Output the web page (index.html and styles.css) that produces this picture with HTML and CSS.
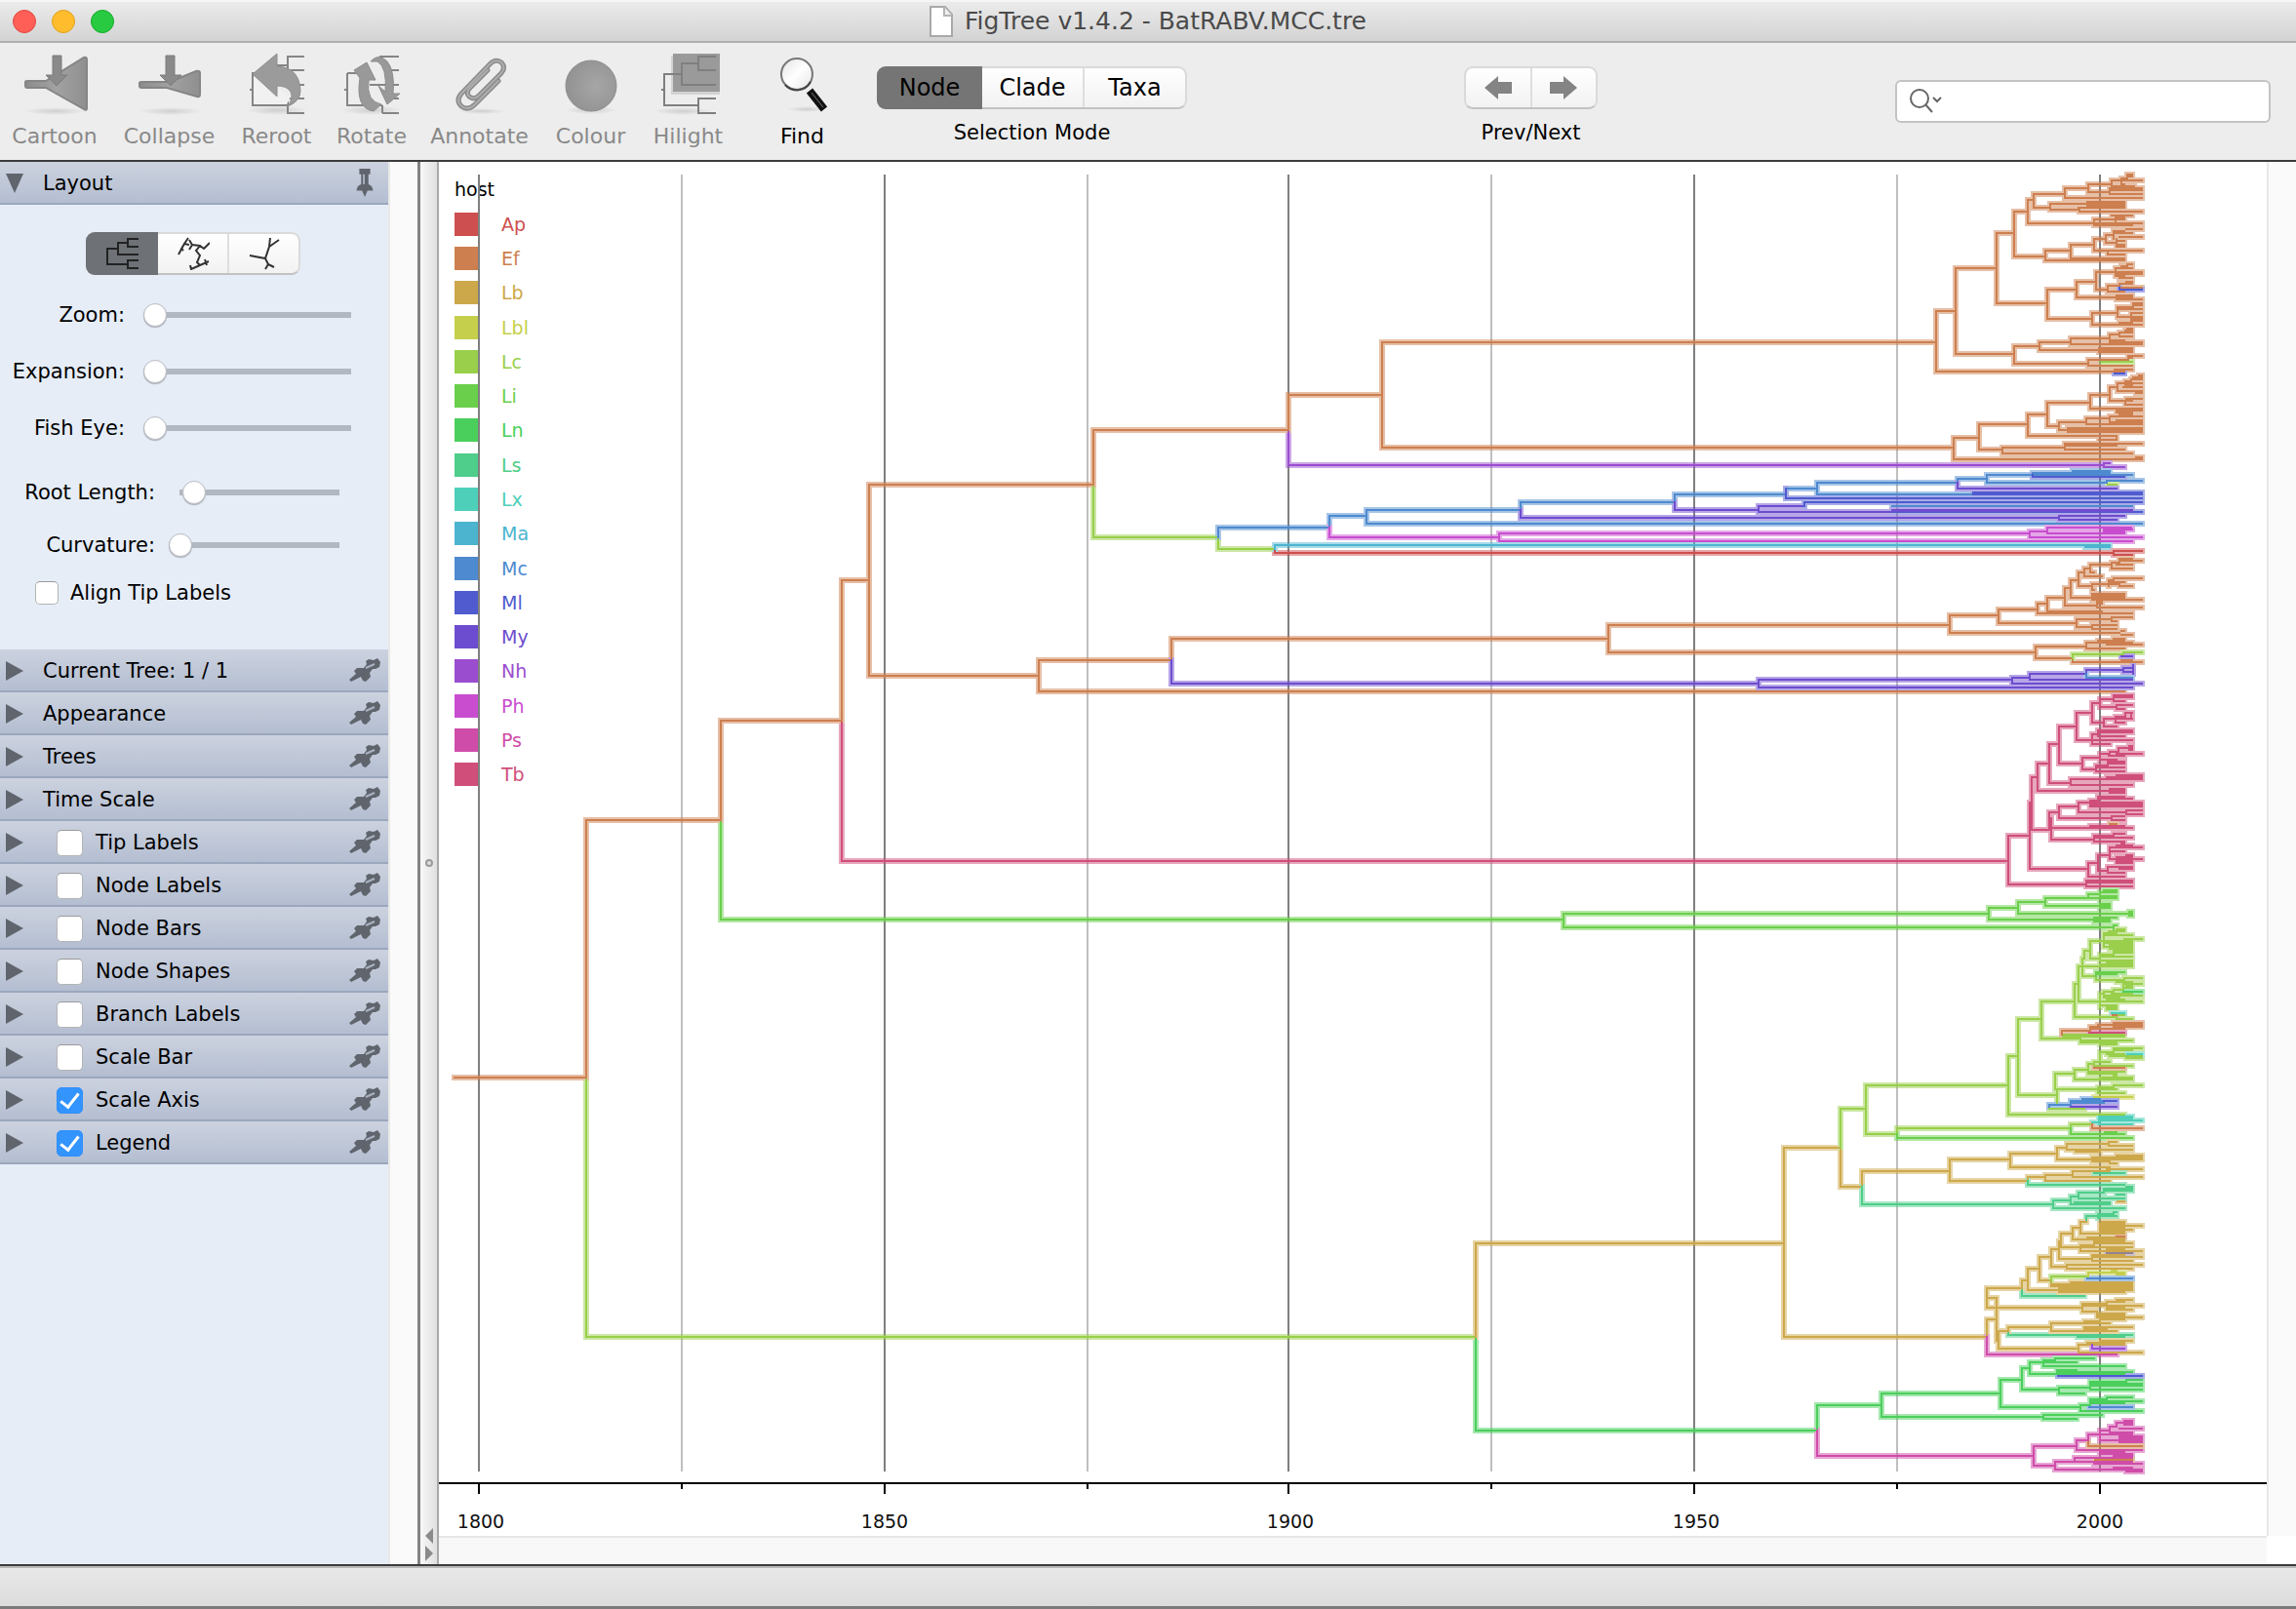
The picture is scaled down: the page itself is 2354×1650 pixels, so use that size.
FILE: index.html
```
<!DOCTYPE html>
<html lang="en">
<head>
<meta charset="utf-8">
<title>FigTree v1.4.2 - BatRABV.MCC.tre</title>
<link rel="stylesheet" href="styles.css">
</head>
<body>
<svg class="defs" width="0" height="0" aria-hidden="true">
  <defs>
    <linearGradient id="metal" x1="0" y1="0" x2="1" y2="0"><stop offset="0" stop-color="#8c8c8c"/><stop offset=".5" stop-color="#a2a2a2"/><stop offset="1" stop-color="#8f8f8f"/></linearGradient>
    <radialGradient id="ball" cx=".6" cy=".5" r=".6"><stop offset="0" stop-color="#a6a6a6"/><stop offset="1" stop-color="#929292"/></radialGradient>
    <radialGradient id="floor"><stop offset="0" stop-color="#000" stop-opacity=".13"/><stop offset="1" stop-color="#000" stop-opacity="0"/></radialGradient>
    <linearGradient id="glass" x1="0" y1="0" x2="1" y2="1"><stop offset="0" stop-color="#e2e2e2"/><stop offset=".5" stop-color="#fff"/><stop offset="1" stop-color="#e4e4e4"/></linearGradient>
    <symbol id="pin" viewBox="0 0 32 26"><path d="M0 22 7 16 5 13 8 10 15 10 18 6 17 3 20 1 25 2 29 0 32 4 31 9 27 11 24 11 21 15 22 19 17 24 14 23 12 19 2 24Z" fill="#60656d"/><path d="M17 10 26 6" stroke="#aab3c2" stroke-width="2"/></symbol>
  </defs>
</svg>

<header class="titlebar">
  <div class="lights"><span class="light close"></span><span class="light minimise"></span><span class="light grow"></span></div>
  <h1 class="title">
    <svg width="24" height="32" viewBox="0 0 24 32"><path d="M1 1H16L23 9V31H1Z" fill="#fff" stroke="#a9a9a9" stroke-width="2"/><path d="M15 1V10H23" fill="#eee" stroke="#b5b5b5" stroke-width="2"/></svg>
    FigTree v1.4.2 - BatRABV.MCC.tre
  </h1>
</header>

<div class="toolbar">
  <div class="tools">
    <button class="tool" disabled>
      <svg width="64" height="64" viewBox="0 0 64 64"><ellipse cx="33" cy="60" rx="32" ry="4" fill="url(#floor)"/><path d="M2 30Q2 29 4 29H23L62 5Q65 4 65 7V57Q65 60 62 58L23 36H4Q2 36 2 34Z" fill="url(#metal)" stroke="#858585" stroke-width="2"/><path d="M30 3H39V23H45L34 34 23 23H30Z" fill="#8a8a8a" stroke="#7d7d7d"/></svg>
      Cartoon</button>
    <button class="tool" disabled>
      <svg width="64" height="64" viewBox="0 0 64 64"><ellipse cx="33" cy="60" rx="32" ry="4" fill="url(#floor)"/><path d="M1 31Q1 30 3 30H32L59 19Q63 18 63 21V43Q63 46 60 45L29 36H3Q1 36 1 34Z" fill="url(#metal)" stroke="#858585" stroke-width="2"/><path d="M28 3H37V23H44L33 34 22 23H28Z" fill="#8a8a8a" stroke="#7d7d7d"/></svg>
      Collapse</button>
    <button class="tool" disabled>
      <svg width="64" height="64" viewBox="0 0 64 64"><ellipse cx="32" cy="59" rx="32" ry="5" fill="url(#floor)"/><path d="M60 4H43V13H32V21H7V54H43V62H60M43 13V18H60M60 33H43M43 54V47H60M4 38H8" fill="none" stroke="#858585" stroke-width="2"/><path d="M8 24 31 46V36L46 45 42 53H8Z" fill="#f1f1f1"/><path d="M7 54H43" stroke="#858585" stroke-width="2"/><path d="M7 22 32 1V14Q55 15 56 39 56 50 43 55 49 47 46 40 42 34 32 34V45Z" fill="#9b9b9b" stroke="#8f8f8f"/></svg>
      Reroot</button>
    <button class="tool" disabled>
      <svg width="64" height="64" viewBox="0 0 64 64"><ellipse cx="32" cy="59" rx="32" ry="5" fill="url(#floor)"/><path d="M60 4H40M60 18H50M60 33H30M43 62H60M43 54V62M60 47H50M7 21V54H43M7 21H28V13M4 38H8" fill="none" stroke="#858585" stroke-width="2"/><path d="M27 10 36 28H29Q26 50 42 53L34 60Q15 57 20 26L14 18Z" fill="#999" stroke="#8c8c8c"/><path d="M31 9Q39 0 48 9 56 19 54 42H61L48 53 39 34 46 40Q48 15 38 9Z" fill="#999" stroke="#8c8c8c"/></svg>
      Rotate</button>
    <button class="tool" disabled>
      <svg width="64" height="64" viewBox="0 0 64 64"><ellipse cx="34" cy="60" rx="24" ry="3" fill="url(#floor)"/><path d="M51 29 27 53Q20 60 13 55 7 49 13 42L43 11Q48 6 54 10 59 15 54 21L31 44Q26 49 21 45 17 41 22 36L40 18" fill="none" stroke="#8b8b8b" stroke-width="5" stroke-linecap="round"/><path d="M51 29 27 53Q20 60 13 55 7 49 13 42L43 11Q48 6 54 10 59 15 54 21L31 44Q26 49 21 45 17 41 22 36L40 18" fill="none" stroke="#adadad" stroke-width="2" stroke-linecap="round"/></svg>
      Annotate</button>
    <button class="tool" disabled>
      <svg width="64" height="64" viewBox="0 0 64 64"><ellipse cx="32" cy="59" rx="26" ry="4" fill="url(#floor)"/><circle cx="32" cy="34" r="26" fill="url(#ball)" stroke="#8e8e8e"/></svg>
      Colour</button>
    <button class="tool" disabled>
      <svg width="64" height="64" viewBox="0 0 64 64"><ellipse cx="26" cy="60" rx="30" ry="4" fill="url(#floor)"/><rect x="14" y="3" width="50" height="40" fill="#d2d2d2"/><rect x="16" y="1" width="48" height="39" fill="#9a9a9a"/><path d="M60 4H42V18H60M42 11H25V33H60M25 22H7V54H42M60 47H42V62H60M4 38H8" fill="none" stroke="#7f7f7f" stroke-width="2"/></svg>
      Hilight</button>
    <button class="tool find">
      <svg width="64" height="64" viewBox="0 0 64 64"><ellipse cx="36" cy="58" rx="20" ry="3" fill="url(#floor)"/><path d="M39 39 54 58" stroke="#111" stroke-width="8"/><path d="M41 41 53 56" stroke="#777" stroke-width="1"/><circle cx="26" cy="22" r="16" fill="url(#glass)" stroke="#777" stroke-width="2"/><path d="M14 33A16 16 0 0 0 40 30" fill="none" stroke="#444" stroke-width="2"/></svg>
      Find</button>
  </div>
  <div class="group mode">
    <div class="segments"><button class="seg on">Node</button><button class="seg">Clade</button><button class="seg">Taxa</button></div>
    <span>Selection Mode</span>
  </div>
  <div class="group nav">
    <div class="segments">
      <button class="seg" aria-label="Previous"><svg width="28" height="24" viewBox="0 0 28 24"><path d="M0 12 14 0V6H28V18H14V24Z" fill="#848484"/></svg></button>
      <button class="seg" aria-label="Next"><svg width="28" height="24" viewBox="0 0 28 24"><path d="M28 12 14 0V6H0V18H14V24Z" fill="#848484"/></svg></button>
    </div>
    <span>Prev/Next</span>
  </div>
  <label class="search">
    <svg width="36" height="28" viewBox="0 0 36 28"><circle cx="11" cy="11" r="9" fill="none" stroke="#666" stroke-width="2"/><path d="M17 17 24 25M25 10 29 14 33 10" fill="none" stroke="#666" stroke-width="2"/></svg>
    <input type="text" aria-label="Search">
  </label>
</div>

<main class="workspace">
  <aside class="sidebar">
    <section>
      <div class="head"><button class="fold open">Layout</button><button class="pin" aria-label="Pin"><svg width="18" height="30" viewBox="0 0 18 32"><path d="M3 0H15V6H13V17Q18 19 18 24H12L9 31 6 24H0Q0 19 5 17V6H3Z" fill="#60656d"/><path d="M8 6V17" stroke="#aab3c2" stroke-width="2"/></svg></button></div>
      <div class="panel">
        <div class="segments shapes">
          <button class="seg on" aria-label="Rectangular"><svg width="34" height="34" viewBox="0 0 34 34"><path d="M34 2H23V10H34M23 6H13V18H34M13 12H2V28H23M34 24H23V32H34" fill="none" stroke="#222" stroke-width="2"/></svg></button>
          <button class="seg" aria-label="Polar"><svg width="34" height="34" viewBox="0 0 34 34"><path d="M2 18 8 7 13 8M8 7 12 1M8 7 5 12 7 14M13 3 16 8 13 13M16 8 24 9 28 12 34 6M24 9 20 14 24 19 21 26 24 29 33 25M29 23 31 29M14 29 15 33 24 29" fill="none" stroke="#333" stroke-width="2"/></svg></button>
          <button class="seg" aria-label="Radial"><svg width="34" height="34" viewBox="0 0 34 34"><path d="M2 19 18 22 22 10 23 1M22 10 32 3M18 22 21 28 18 33M21 28 27 31" fill="none" stroke="#333" stroke-width="2"/></svg></button>
        </div>
        <div class="field"><label for="zoom">Zoom:</label><input id="zoom" type="range" value="0"></div>
        <div class="field"><label for="expansion">Expansion:</label><input id="expansion" type="range" value="0"></div>
        <div class="field"><label for="fisheye">Fish Eye:</label><input id="fisheye" type="range" value="0"></div>
        <div class="field wide root"><label for="rootlen">Root Length:</label><input id="rootlen" type="range" value="2"></div>
        <div class="field wide curve"><label for="curvature">Curvature:</label><input id="curvature" type="range" value="0"></div>
        <label class="tick align"><input type="checkbox"> Align Tip Labels</label>
      </div>
    </section>
    <div class="head"><button class="fold">Current Tree: 1 / 1</button><button class="pin" aria-label="Pin"><svg width="32" height="26"><use href="#pin"/></svg></button></div>
    <div class="head"><button class="fold">Appearance</button><button class="pin" aria-label="Pin"><svg width="32" height="26"><use href="#pin"/></svg></button></div>
    <div class="head"><button class="fold">Trees</button><button class="pin" aria-label="Pin"><svg width="32" height="26"><use href="#pin"/></svg></button></div>
    <div class="head"><button class="fold">Time Scale</button><button class="pin" aria-label="Pin"><svg width="32" height="26"><use href="#pin"/></svg></button></div>
    <div class="head"><button class="fold" aria-label="Expand"></button><label class="tick"><input type="checkbox"> Tip Labels</label><button class="pin" aria-label="Pin"><svg width="32" height="26"><use href="#pin"/></svg></button></div>
    <div class="head"><button class="fold" aria-label="Expand"></button><label class="tick"><input type="checkbox"> Node Labels</label><button class="pin" aria-label="Pin"><svg width="32" height="26"><use href="#pin"/></svg></button></div>
    <div class="head"><button class="fold" aria-label="Expand"></button><label class="tick"><input type="checkbox"> Node Bars</label><button class="pin" aria-label="Pin"><svg width="32" height="26"><use href="#pin"/></svg></button></div>
    <div class="head"><button class="fold" aria-label="Expand"></button><label class="tick"><input type="checkbox"> Node Shapes</label><button class="pin" aria-label="Pin"><svg width="32" height="26"><use href="#pin"/></svg></button></div>
    <div class="head"><button class="fold" aria-label="Expand"></button><label class="tick"><input type="checkbox"> Branch Labels</label><button class="pin" aria-label="Pin"><svg width="32" height="26"><use href="#pin"/></svg></button></div>
    <div class="head"><button class="fold" aria-label="Expand"></button><label class="tick"><input type="checkbox"> Scale Bar</label><button class="pin" aria-label="Pin"><svg width="32" height="26"><use href="#pin"/></svg></button></div>
    <div class="head"><button class="fold" aria-label="Expand"></button><label class="tick"><input type="checkbox" checked> Scale Axis</label><button class="pin" aria-label="Pin"><svg width="32" height="26"><use href="#pin"/></svg></button></div>
    <div class="head"><button class="fold" aria-label="Expand"></button><label class="tick"><input type="checkbox" checked> Legend</label><button class="pin" aria-label="Pin"><svg width="32" height="26"><use href="#pin"/></svg></button></div>
  </aside>
  <div class="gutter"></div>
  <div class="splitter"><span class="grip"></span><svg class="nudge" width="10" height="36" viewBox="0 0 10 36"><path d="M9 0V16L1 8ZM1 18V34L9 26Z" fill="#8a8a8a"/></svg></div>
  <div class="view">
    <div class="plot">
      <div class="legend">
        <div class="legend-title">host</div>
        <ul>
          <li class="ap">Ap</li><li class="ef">Ef</li><li class="lb">Lb</li><li class="lbl">Lbl</li><li class="lc">Lc</li><li class="li">Li</li><li class="ln">Ln</li><li class="ls">Ls</li><li class="lx">Lx</li><li class="ma">Ma</li><li class="mc">Mc</li><li class="ml">Ml</li><li class="my">My</li><li class="nh">Nh</li><li class="ph">Ph</li><li class="ps">Ps</li><li class="tb">Tb</li>
        </ul>
      </div>
      <svg class="tree" viewBox="450 166 1874 1409">
        <path class="minor" d="M699 179V1509M1115 179V1509M1529 179V1509M1945 179V1509"/>
        <path class="major" d="M491 179V1509M907 179V1509M1321 179V1509M1737 179V1509M2153 179V1509"/>
        <path class="axis" d="M450 1521H2324M491 1521V1532M907 1521V1532M1321 1521V1532M1737 1521V1532M2153 1521V1532M699 1521V1527M1115 1521V1527M1529 1521V1527M1945 1521V1527"/>
        <g class="years"><text x="493" y="1567">1800</text><text x="907" y="1567">1850</text><text x="1323" y="1567">1900</text><text x="1739" y="1567">1950</text><text x="2153" y="1567">2000</text></g>
        <defs>
          <g id="branches">
            <!-- backbone -->
            <path class="lc" d="M601 1105V1371H1513M1121 497V551H1249V563H1307"/>
            <path class="li" d="M739 841V943H1603M1603 937V951M1603 937H1940M1603 951H1940"/>
            <path class="tb" d="M863 739V883H1940"/>
            <path class="nh" d="M1321 441V477H1940"/>
            <path class="ef" d="M466 1105H601V841H739V739H863V595H891M891 497V693M891 497H1121V441H1321V405H1417M1417 351V459M1417 351H1940M1417 459H1940M891 693H1065M1065 677V709M1065 709H1940M1065 677H1201V655H1649M1649 641V669M1649 641H1940M1649 669H1940"/>
            <path class="mc" d="M1249 551V541H1363V529H1401M1401 523V537M1401 537H1940M1401 523H1559V515H1717V507H1831V501H1863M1863 495V507M1863 495H1940M1863 507H1940"/>
            <path class="my" d="M1559 523V531H1940M1717 515V523H1803M1803 519V525M1803 519H1850M1803 525H1940"/>
            <path class="ml" d="M1831 501V511H1940M1850 519V515H1940"/>
            <path class="ph" d="M1363 541V551H1537M1537 547V555M1537 547H1940M1537 555H1940"/>
            <path class="ap" d="M1307 563V567H1940"/><path class="ma" d="M1307 563V559H1940"/>
            <path class="my" d="M1201 677V701H1803M1803 697V705M1803 697H1940M1803 705H1940"/>
            <path class="ln" d="M1513 1371V1467H1863V1441H1929M1929 1429V1453M1929 1429H1940M1929 1453H1940"/>
            <path class="ps" d="M1863 1467V1493H1940"/>
            <path class="lb" d="M1513 1371V1275H1829M1829 1177V1371M1829 1371H1940M1829 1177H1887V1217H1909V1201H1940"/>
            <path class="lc" d="M1887 1177V1137H1913M1913 1113V1163M1913 1113H1940M1913 1163H1940"/>
            <path class="ls" d="M1909 1217V1235H1940"/>
            <!-- recent clades, drawn on a three times finer grid -->
            <g transform="translate(1940 165) scale(.333333)">
              <path class="ef" d="M0 558H135M135 462V648M135 462H195M135 648H714M685 642H738M195 330V594M195 330H321M321 222V438M321 222H375M375 156V294M375 156H417M417 120V192M417 120H435M435 102V144M435 102H531M531 84V114M531 84H603M603 72V96M603 72H675M675 60V78M675 60H768M705 54V72M705 54H723M723 42V48M723 42H738M723 48H738M705 72H714M675 78H744M603 96H670M669 84V102M669 84H768M669 90H768M669 102H768M531 114H768M435 144H487M487 132V150M487 132H600M600 126H714M600 132H714M600 138H714M573 144H714M487 150H577M577 144V156M577 156H768M675 168H738M417 192H621M621 180V198M621 180H687M687 174V186M687 174H714M687 180H714M621 192H768M621 198H738M375 294H471M471 276V306M471 276H549M549 258V300M549 258H621M621 240V276M621 240H657M657 228V252M657 228H681M681 216V240M681 216H714M720 210H768M681 222H738M657 252H690M690 240V252M700 234H768M690 246H714M690 258H714M621 276H768M663 276V288M663 288H714M690 264H714M549 300H714M471 306H714"/>
              <path class="ef" d="M321 438H477M477 396V486M477 396H567M567 372V420M567 372H627M627 342V396M627 342H687M687 330V354M687 330H738M705 324H723V318H738M687 342H768M687 348H768M687 354H714M700 360H738M627 396H663M663 384V402M663 384H700V378H738M720 372H738M700 390H768M663 402H714M567 420H690M690 414H738M690 420H738M690 426H768M477 486H615M615 468V504M615 468H693M693 450V480M693 450H741M741 438H768M741 444V456M741 444H768M700 456H768M693 480H735M735 468V492M735 468H768M735 480H768M735 486H768M735 492H768M615 504H768M700 498H738"/>
              <path class="ef" d="M195 594H375M375 570V624M375 570H453M453 558V582M453 558H549M549 546V564M549 546H669M669 534V552M669 534H700V528H738M717 528V522H738M723 516H738M700 540H738M669 552H714M549 564H768M669 558H768M453 582H738M635 576H738M635 588H738M375 624H603M603 612V630M603 612H725V600H768M725 606H738M603 630H738"/>
              <path class="ef" d="M0 882H189M189 852V918M189 852H267M267 810V888M267 810H417M417 780V846M417 780H477M477 744V816M477 744H609M609 720V762M609 720H669M669 696V738M669 696H693M693 684V708M693 684H717V678H735V672H768M741 666H768M760 660H768M717 684H768M717 690H738M710 696H768M693 708H768M750 714H768M669 738H717M717 738V750M720 732H768M717 738H738M717 750H768M609 762H768M690 768H768M690 774H738M477 816H513M513 804V828M513 804H597M597 792V810M597 792H669M669 786V804M669 786H768M669 804H768M700 780H738M690 798H768M597 810H768M513 828H540M540 822H768M540 828H768M540 834H768M417 846H690M690 846V858M636 858H690M267 888H339M339 882V900M339 882H531M531 870V888M531 870H768M531 876H690M531 888H714M339 900H738M189 918H768M750 912H768"/>
              <path class="ml" d="M699 390V396H768M685 654H714"/><path class="lc" d="M645 618H738"/>
              <path class="nh" d="M0 936H651M651 930V942M651 930H669M651 942H714"/>
            </g>
            <g transform="translate(1940 465) scale(.333333)">
              <path class="mc" d="M0 90H201V78H291M291 66V90M291 66H433V60H555V54H669M555 60H669M433 66H738M291 90H660M660 84V90M660 84H768M0 126H249M0 162H738M0 216H768"/>
              <path class="ml" d="M433 66V72H714M249 126V120H768M249 126H768M0 138H768M0 150H768M0 180H768"/>
              <path class="lc" d="M663 96H690"/>
              <path class="my" d="M201 90V108H690M0 174H738M0 178H738M0 198H513M513 192V204M513 192H714M513 204H690"/>
              <path class="ph" d="M0 246H423M423 240V258M423 240H477V228H735M650 234H738M650 240H714M477 246H714M423 258H768M0 270H738"/>
              <path class="ma" d="M0 282H669M595 288H669"/><path class="ap" d="M0 306H681M681 300V312M681 300H768M681 312H738"/>
              <path class="ef" d="M0 528H177M177 498V552M177 498H327M327 480V522M327 480H447M447 462V492M447 462H477M477 444V486M477 444H531M531 414V468M531 414H549M549 390V444M549 390H573M573 366V408M573 366H591M591 354V378M591 354H609M609 342V366M609 342H675M675 336V354M675 336H700V330H768M700 324H738M690 342H738M675 354H738M609 366H621M591 378H645M573 408H615M615 402V420M615 402H667M667 390V408M667 390H680V384H768M667 396H714M667 402H700V408H738M615 420H621M549 444H714M615 450H768M615 432V444M615 432H714M615 438H714M531 468H630M630 456V474M630 456H645M630 462H645M630 474H768M477 486H645M447 492H738M327 522H567M567 510V534M567 510H675V504H738M675 516H690M567 534H615M615 528V540M615 528H690M615 540H690M177 552H700M705 546H714M705 558H738"/>
              <path class="ef" d="M0 612H441M441 594V630M441 594H597M597 582V600M597 582H633V576H714M680 570H714M633 582H738M660 588H768M597 600H714M441 630H555V642H768M705 636H738M0 732H714"/>
              <path class="lc" d="M555 630V618H710V612H768"/>
              <path class="my" d="M705 624H738M0 696H369M369 690V708M369 690H423V678H597V666H710M710 660V672M710 672H738M710 660H741M741 650V678M423 684V696H738M369 708H768M0 720H738"/>
              <path class="mc" d="M597 678V690H738"/>
            </g>
            <g transform="translate(1940 700) scale(.333333)">
              <path class="tb" d="M0 549H357M357 471V621M357 471H423M423 369V573M423 369H429M429 291V453M429 291H447M447 249V333M447 249H483M483 189V309M483 189H513M513 135V249M513 135H567M567 93V177M567 93H615M615 63V123M615 63H639M639 51V75M639 51H681M681 39V57M681 39H738M681 45H738M681 57H714M639 75H690V69H738M690 81H714M615 123H651M651 111V135M651 111H687M687 105V123M687 105H717M717 93V105M717 93H738M735 93V111M690 111H738M687 123H714M651 135H690M567 177H615M615 159V189M615 159H633M633 147V165M633 147H738M633 153H738M633 165H714M615 177H738M615 189H669"/>
              <path class="tb" d="M513 249H585M585 231V267M585 231H639M639 219V237M639 219H670V213H697V201H738M730 195H738M730 207H738M690 219H768M665 225H714M639 237H690M585 267H627M627 255V273M627 255H663V243H714M663 249H714M627 261H714M627 273H714M483 309H549M549 297V315M549 297H768M660 291H768M690 285H768M549 315H738M447 333H714M669 327H714M669 339H714M429 453H489M483 399V453M483 399H513M513 381V417M513 381H573M573 369V399M573 369H609M609 363V381M609 363H633V351H714M633 357H738M609 369H768M609 381H768M609 375H768M573 399H720V393H768M720 405H768M513 417H675V411H714M675 423H714M489 417V483M489 447H738M609 441H714M489 483H621M621 471V489M621 471H680V465H714M621 477H738M621 489H714"/>
              <path class="tb" d="M423 573H603M603 555V597M603 555H633M633 531V579M633 531H669M669 507V543M669 507H768M690 501H738M705 495H714M669 519H714M669 543H768M690 543V537H738M720 531H738M690 549H738M690 555H738M633 579H663M663 567V585M663 567H738M700 573H738M663 585H714M603 597H714M357 621H597M597 609V627M597 609H738M597 615H738M597 627H738"/>
              <path class="ef" d="M670 435H690"/>
              <path class="li" d="M0 711H297M297 693V729M297 693H387M387 675V711M387 675H471M471 663V687M471 663H603M603 651V663M603 651H640M640 645H690M650 639H690M640 657H690M603 663H690M471 687H669M640 681H669M640 693H669M387 711H738M729 705H738M729 717H738M297 729H669M621 723H690M621 735H669M0 753H681M681 747V759M681 747H690"/>
            </g>
            <g transform="translate(1940 940) scale(.333333)">
              <path class="lc" d="M0 519H357M357 429V609M357 429H387M387 315V549M387 315H459M459 261V375M459 261H561M561 207V309M561 207H573M573 153V261M573 153H585M585 129V183M585 129H591V105H609M609 75V129M609 75H651M651 51V93M651 51H690M665 45H714M690 39H714M651 57H738M651 75H738M715 69H768M651 81H738M651 93H738M670 87H738M670 99H738M609 129H639M639 117V135M639 117H681V105H738M681 111H738M639 123H738M639 135H738M660 141H738M585 153H738M639 147H738M585 183H627V195H714M715 189H768M690 201H738M710 207H768M720 213H738M710 219H738M573 261H768M639 237V279M639 237H651V231H681V225H710V207M651 243H768M675 237H738M660 255H714M651 249H700M639 273H690M660 279H690M660 285H690M561 309H690V303H714M690 315H738"/>
              <path class="lc" d="M459 375H579M525 363H714M525 369H714M579 381V387H690V393M579 381H738M640 393H690M387 549H507M507 531V573M501 483V531M501 483H561M561 471V501M561 471H603M603 453V483M603 453H620V447H669M640 417V447M640 417H680V411H738M680 405H768M660 423H714M670 429H768M720 435H768M620 459H738M603 477H714M603 483H690M680 489H690M561 501H738M640 495H738M501 531H633M633 525V543M633 525H680V519H768M633 531H690M633 543H714M483 585V591H591M357 609H714"/>
              <path class="li" d="M627 183V171H714M627 177H690"/><path class="ln" d="M710 231H768"/><path class="lx" d="M674 297H714M724 423H768"/>
              <path class="ef" d="M523 363V351H609M609 339V351M609 339H633V333H768M681 327H768M681 339H768M609 345H714M678 303H690M620 465H714"/><path class="tb" d="M607 357H714"/>
              <path class="lbl" d="M620 555H738"/><path class="mc" d="M483 585V579H549M549 567V579M549 567H585V561H640M585 567H650M549 573H650"/><path class="ml" d="M650 567H690"/><path class="my" d="M549 585H690"/>
              <path class="lc" d="M0 669H15M15 651V669M15 651H549V639H615"/><path class="li" d="M549 651V669H714M655 663H690M15 669V681H738"/><path class="lx" d="M615 633H635M635 621V639M635 621H738M635 615H738M635 627H768M635 639H738"/><path class="ef" d="M615 639V651H768"/>
              <path class="lb" d="M0 783H177M177 747V813M177 747H363M363 729V771M363 729H507M507 711V747M507 711H537M537 699V717M537 699H665V693H690M665 705H738M537 717H738M565 723H640M507 747H615M615 741V753M615 741H768M690 735H768M615 747H768M615 753H670V759H690M363 771H669M660 777H768M177 813H417M417 801V813M417 801H471M471 795V813M471 795H555M555 783V801M555 783H669M555 801H768M471 813H669M694 876H714"/>
              <path class="ls" d="M620 789H714M417 813V825H714M720 831H738M650 837H738M650 843H738M0 885H495M495 873V897M495 873H549M549 861V885M549 861H573M573 849V867M573 849H650V837M690 855H714M573 867H714M549 885H669M560 879H669M495 897H714"/>
            </g>
            <g transform="translate(1940 1220) scale(.333333)">
              <path class="ls" d="M597 99V81H633M633 75V87M633 75H680V69H690M633 81H690M633 87H640M399 303V327H591M357 435V447H738M570 453H714"/>
              <path class="lb" d="M0 453H291M291 303V363M291 303H399M399 279V303M399 279H417M417 243V309M417 243H453M453 207V279M453 207H489M489 183V237M489 183H513M513 159V213M519 135V177M519 135H555M555 117V153M555 117H579M579 99V135M579 99H597M579 135H640V105H714M645 99H714M640 111H768M640 117H714M640 123H738M640 129H714M640 135H714M555 153H714M600 147H714M519 177H579M579 171V189M579 171H620V165H738M579 177H738M620 159H714M579 189H768M660 183H714M513 213H615M615 201V219M615 201H714M615 207H768M615 219H738M489 237H537M537 231V243M537 231H768M537 243H738M453 279H489V291H549V285H738M549 291H738M489 297H738M417 309H738M513 303H738M513 315H714M291 333H321V465H327M291 363H585M585 351V375M585 351H660V345H714M690 339H738M585 357H768M660 363H714M660 369H738M585 375H630V381H714M630 387H714M630 393H768M291 399V453M291 399H321M327 435V489M327 435H357V423H489M489 411V435M489 411H591V405H640V399H714M591 411H669M591 423H738M489 435H690M591 429H660M327 489H573M573 477V501M573 477H600V471H640V465H738M640 471H714M600 477H714M573 501H768"/>
              <path class="ef" d="M690 144H714"/><path class="dusk" d="M660 195H738"/><path class="lc" d="M489 279V267H603"/><path class="lbl" d="M603 267V255H714M675 249H690M690 261H714"/><path class="mc" d="M600 272H738"/>
              <path class="nh" d="M615 477V489H714"/><path class="ps" d="M291 453V507H690"/>
              <path class="ln" d="M0 627H333M333 585V669M333 585H399M399 549V615M399 549H423M423 531V567M423 531H465M465 525V543M465 525H500V519H621M465 531H567M465 543H714M423 567H507M507 555V567M507 555H567M507 561H738M507 567H714M399 615H513M513 609V627M513 609H609M609 597V615M609 591H720V585H768M609 597H768M609 603H768M609 615H768M513 627H591M333 669H579M579 663V681M579 663H609M609 645V663M609 645H660V639H738M609 651H768M609 657H714M579 681H768M0 699H465M465 693V705M465 693H645M465 705H567"/>
              <path class="ml" d="M510 573H768"/><path class="mc" d="M606 669H738"/>
              <path class="ps" d="M0 819H435M435 789V849M435 789H567M567 771V801M567 771H603M603 753V777M603 753H639M639 741V771M639 741H669M669 729V747M669 729H690V717H738M713 711H738M713 723H738M700 735H768M669 747H738M640 753H738M639 771H768M700 759H768M700 765H768M700 777H768M567 801H768M640 807H714M640 813H738M435 849H501M501 837V861M501 837H561M561 825V837M561 825H738M680 819H738M561 837H738M620 843H768M501 861H768M680 855H738M720 867H768"/>
              <path class="ef" d="M603 777V789H768M624 831H738"/>
            </g>
          </g>
        </defs>
        <use href="#branches" class="halo"/>
        <use href="#branches" class="core"/>
      </svg>
      <div class="vscroll"></div>
    </div>
    <div class="hscroll"></div>
  </div>
</main>
<footer class="status"></footer>
</body>
</html>
```
FILE: styles.css
```
* { box-sizing: border-box; }
body {
  margin: 0;
  min-height: 100vh;
  display: flex;
  flex-direction: column;
  background: #ededed;
  color: #000;
  font: 21px/28px "DejaVu Sans", "Noto Sans", sans-serif;
}
button { border: 0; padding: 0; margin: 0; background: none; font: inherit; color: inherit; }
.defs { position: absolute; }

/* title bar */
.titlebar {
  height: 44px;
  display: grid;
  grid-template-columns: 1fr auto 1fr;
  align-items: center;
  border-top: 2px solid #f5f5f5;
  border-bottom: 2px solid #b0b0b0;
  background: linear-gradient(#ebebeb, #d3d3d3);
}
.lights { display: flex; gap: 16px; padding-left: 13px; }
.light { width: 24px; height: 24px; border-radius: 50%; border: 1px solid; }
.close { background: #ff5f57; border-color: #e2463f; }
.minimise { background: #ffbd2e; border-color: #e1a116; }
.grow { background: #28ca41; border-color: #12ac28; }
.title {
  display: flex;
  align-items: center;
  gap: 12px;
  margin: 0;
  font-weight: 400;
  font-size: 25px;
  color: #4a4a4a;
}

/* tool bar */
.toolbar {
  height: 122px;
  display: flex;
  border-bottom: 2px solid #3c3c3c;
  padding-left: 13px;
}
.tools {
  display: grid;
  grid-template-columns: 86px 91px 71px 66px 97px 73px 69px 107px;
  column-gap: 29px;
  padding-top: 10px;
}
.tool {
  display: flex;
  flex-direction: column;
  align-items: center;
  gap: 8px;
  height: 100px;
  font-size: 22px;
  white-space: nowrap;
  color: #898989;
}
.tool svg { overflow: visible; }
.find { color: #000; }
.group { display: flex; flex-direction: column; align-items: center; padding-top: 24px; gap: 10px; }
.mode { width: 318px; margin-left: 23px; }
.nav { width: 137px; margin-left: 284px; }
.segments {
  display: flex;
  width: 100%;
  height: 44px;
  border: 2px solid #dadada;
  border-bottom-color: #c2c2c2;
  border-radius: 9px;
  background: linear-gradient(#fff, #f2f2f2);
}
.seg { flex: 1; display: flex; align-items: center; justify-content: center; font-size: 24px; }
.seg + .seg { border-left: 2px solid #dedede; }
.seg.on { margin: -2px 0 -2px -2px; border-radius: 9px 0 0 9px; background: #757575; }
.seg.on + .seg { border-left: 0; }
.mode .seg.on { flex: 0 0 108px; }
.search {
  width: 385px;
  height: 44px;
  margin: 38px 26px 0 auto;
  display: flex;
  align-items: center;
  padding-left: 12px;
  border: 2px solid #c3c3c3;
  border-radius: 6px;
  background: #fff;
}
.search input { flex: 1; min-width: 0; border: 0; outline: 0; background: none; font: inherit; }

/* workspace */
.workspace {
  flex: 1;
  display: grid;
  grid-template-columns: 398px 30px 22px 1fr;
  border-bottom: 2px solid #3c3c3c;
}
.sidebar { background: #e6edf7; }
.head {
  height: 44px;
  display: flex;
  align-items: center;
  padding: 2px 8px 0 6px;
  border-bottom: 2px solid #9ba7bd;
  background: linear-gradient(#ccd2df, #b4bed1);
}
.fold { display: flex; align-items: center; gap: 20px; white-space: nowrap; }
.fold::before {
  content: "";
  width: 18px;
  height: 20px;
  background: #60656d;
  clip-path: polygon(0 0, 100% 50%, 0 100%);
}
.fold.open::before { clip-path: polygon(0 0, 100% 0, 50% 100%); }
.pin { margin-left: auto; display: flex; width: 32px; justify-content: center; }
.panel { padding: 28px 0 34px; }
.shapes { width: 220px; margin: 0 0 12px 88px; }
.shapes .seg.on { flex: 0 0 74px; background: #6e7277; }
.field { display: flex; align-items: center; gap: 19px; height: 58px; }
.field label { width: 128px; text-align: right; }
.field input { width: 213px; }
.wide label { width: 159px; }
.root { gap: 25px; margin-top: 8px; }
.root input { width: 164px; }
.curve { gap: 14px; height: 50px; }
.curve input { width: 175px; }
input[type="range"] {
  appearance: none;
  margin: 0;
  height: 26px;
  background: linear-gradient(#b2b8c1, #b2b8c1) center / 100% 6px no-repeat;
}
input[type="range"]::-webkit-slider-thumb {
  appearance: none;
  width: 24px;
  height: 24px;
  border: 1px solid #b9bcc2;
  border-radius: 50%;
  background: #fff;
  box-shadow: 0 1px 1px #a9adb5;
}
.tick { display: flex; align-items: center; gap: 13px; margin-left: 34px; }
.tick input {
  appearance: none;
  width: 27px;
  height: 27px;
  margin: 0;
  border: 1px solid #b4b4b4;
  border-top-color: #9b9b9b;
  border-radius: 5px;
  background: #fff;
}
.tick input:checked { border-color: #2f8ffc; background: #3394fe; display: grid; place-items: center; }
.tick input:checked::before {
  content: "";
  width: 8px;
  height: 16px;
  margin-bottom: 4px;
  border: solid #fff;
  border-width: 0 3px 3px 0;
  transform: rotate(38deg);
}
.align { height: 48px; margin-left: 36px; gap: 12px; }
.align input { width: 24px; height: 24px; }
.gutter { background: #fafafa; border-left: 2px solid #e8e8e8; }
.splitter {
  position: relative;
  border-left: 3px solid #838383;
  border-right: 2px solid #a9a9a9;
  background: linear-gradient(90deg, #f8f8f8, #e0e0e0);
}
.grip { position: absolute; top: 50%; left: 5px; width: 8px; height: 8px; margin-top: -4px; border: 2px solid #9a9a9a; border-radius: 50%; background: #ddd; }
.nudge { position: absolute; left: 4px; bottom: 1px; }

/* tree view */
.view { min-width: 0; display: flex; flex-direction: column; background: #fff; }
.plot { position: relative; display: flex; }
.tree { position: relative; flex: 1; min-width: 0; display: block; }
.vscroll { width: 30px; border-left: 2px solid #e8e8e8; background: #fafafa; }
.hscroll { flex: 1; margin-right: 30px; border-top: 2px solid #e6e6e6; background: #f8f8f8; }
.legend { position: absolute; top: 12px; left: 16px; font-size: 19px; }
.legend-title { height: 34px; line-height: 32px; }
.legend ul {
  height: 600px;
  margin: 0;
  padding: 0;
  display: grid;
  grid-auto-rows: 1fr;
  list-style: none;
}
.legend li { display: flex; align-items: center; gap: 23px; }
.legend li::before { content: ""; width: 25px; height: 24px; background: currentColor; }

.ap { color: #cd4f4f; }
.ef { color: #cd7f4f; }
.lb { color: #cda84b; }
.lbl { color: #c5cf4b; }
.lc { color: #99cf4b; }
.li { color: #6acf4b; }
.ln { color: #4bcf5c; }
.ls { color: #4fcd8a; }
.lx { color: #4dcfb9; }
.ma { color: #4db4cf; }
.mc { color: #4e8acf; }
.ml { color: #4f5bcf; }
.my { color: #6d4dcf; }
.nh { color: #9a4dcf; }
.ph { color: #c84dcf; }
.ps { color: #cf4da9; }
.tb { color: #cf4f7a; }
.dusk { color: #96838f; }

.tree path { fill: none; vector-effect: non-scaling-stroke; shape-rendering: crispEdges; }
#branches path { stroke: currentColor; stroke-linecap: square; }
.halo { stroke-width: 6px; opacity: .5; }
.core { stroke-width: 2px; }
.major { stroke: #7f7f7f; stroke-width: 2px; }
.minor { stroke: #bfbfbf; stroke-width: 2px; }
.axis { stroke: #000; stroke-width: 2px; }
.years text { font-size: 19px; text-anchor: middle; fill: #111; }

.status {
  height: 44px;
  border-top: 2px solid #b9b9b9;
  border-bottom: 3px solid #7d7a7b;
  background: linear-gradient(#e8e8e8, #dcdcdc);
}
```
